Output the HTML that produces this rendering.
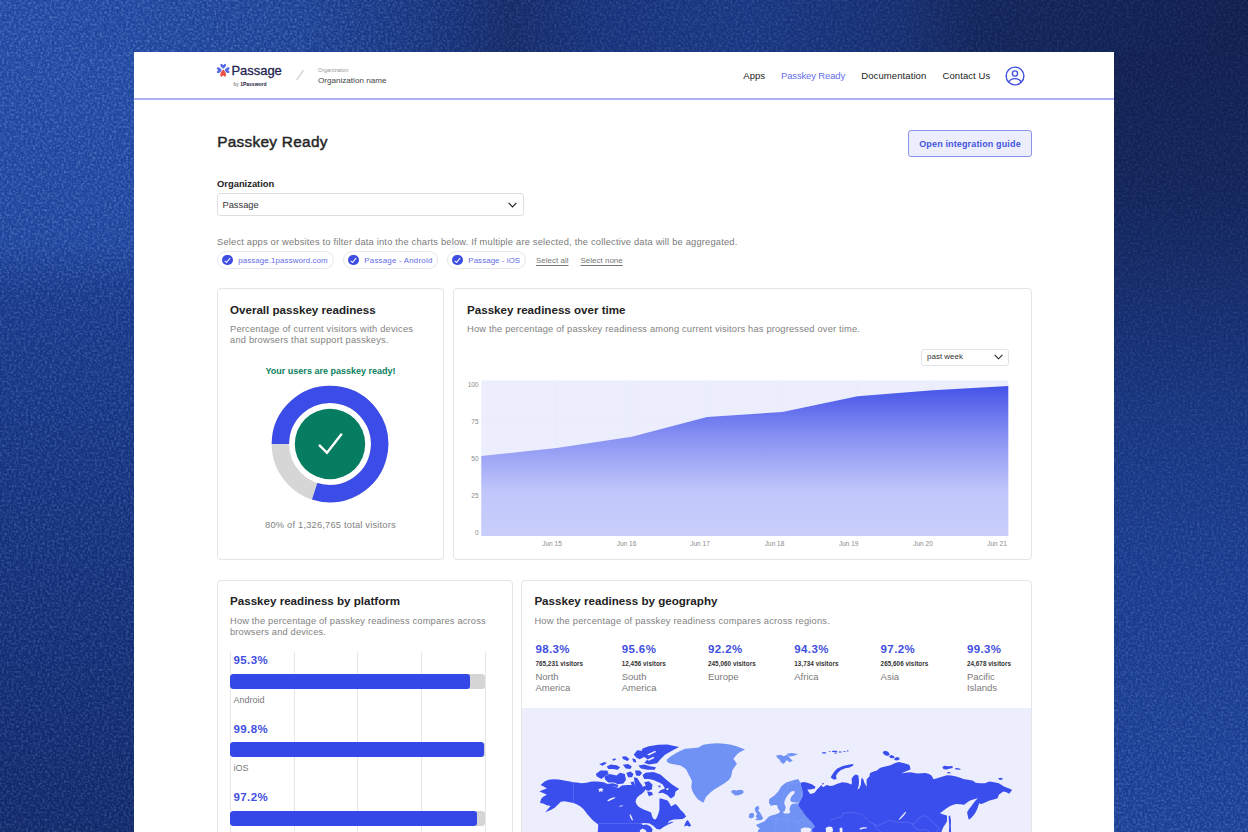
<!DOCTYPE html>
<html lang="en">
<head>
<meta charset="utf-8">
<title>Passkey Ready</title>
<style>
*{box-sizing:border-box;margin:0;padding:0}
html,body{width:1248px;height:832px;overflow:hidden}
body{font-family:"Liberation Sans",sans-serif;color:#222;position:relative;background:#18357f}
#bgT{position:absolute;left:0;top:0;width:1248px;height:52px;background:linear-gradient(to right,#2048a2 0px,#1f469e 134px,#1c4094 300px,#17327a 440px,#152a68 510px,#17327a 600px,#183580 750px,#162e70 900px,#13245a 980px,#111f4e 1248px)}
#bgL{position:absolute;left:0;top:52px;width:134px;height:780px;background:linear-gradient(to bottom,#2048a2 0px,#1e449c 190px,#18388a 240px,#163482 364px,#112869 780px)}
#bgR{position:absolute;left:1114px;top:52px;width:134px;height:780px;background:linear-gradient(to bottom,#122050 0px,#13245a 148px,#152c6c 248px,#17347e 364px,#193a8c 500px,#1b3f96 780px)}
#noise{position:absolute;left:0;top:0;width:1248px;height:832px;pointer-events:none}
#panel{position:absolute;left:134px;top:52px;width:980px;height:780px;background:#fff;overflow:hidden}
header{position:absolute;left:0;top:0;width:980px;height:48px;border-bottom:2px solid #aeb2f5;background:#fff}
.abs{position:absolute;white-space:nowrap}
h1,h2{font-weight:bold}
.card{position:absolute;background:#fff;border:1px solid #e5e5e8;border-radius:4px;overflow:hidden}
.card h2{position:absolute;left:12px;top:12.5px;font-size:11.6px;line-height:16px;color:#222;white-space:nowrap}
.card .desc{position:absolute;left:12px;font-size:9.3px;line-height:11px;color:#828282;white-space:nowrap;letter-spacing:0.21px}

.chip{position:absolute;top:199px;height:18px;border:1px solid #e7e7ed;border-radius:9px;white-space:nowrap;font-size:7.9px;line-height:16px;color:#636ce8}
.chip i{position:absolute;left:4px;top:2.7px;width:10.5px;height:10.5px;border-radius:50%;background:#3d4de2}
.chip i:after{content:"";position:absolute;left:3.6px;top:2.2px;width:2.4px;height:4.6px;border:solid #fff;border-width:0 1.1px 1.1px 0;transform:rotate(40deg)}
.chip span{position:absolute;left:20.3px;top:0.5px;letter-spacing:0.1px}
.lnk{font-size:8px;line-height:11px;color:#777;text-decoration:underline;text-underline-offset:1.5px}
.grid{top:71px;width:1px;height:210px;background:#e6e6e6}
.pct{left:15.5px;font-size:11.5px;line-height:14px;font-weight:bold;color:#3f4fe0;letter-spacing:0.4px;margin-top:0.5px}
.bar{position:absolute;left:12.3px;width:255px;height:15px;border-radius:3px;background:#d5d5d5;overflow:hidden}
.bar b{display:block;height:15px;border-radius:3px;background:#3448e8}
.plat{left:15.5px;font-size:9px;line-height:12px;color:#7a7a7a}
.geo{position:absolute;top:61px;width:86px}
.geo b{display:block;font-size:11.5px;line-height:14px;color:#3f4fe0;letter-spacing:0.4px}
.geo i{display:block;font-style:normal;letter-spacing:0.05px;font-size:6.3px;line-height:8px;margin-top:4px;color:#333;font-weight:bold;white-space:nowrap}
.geo span{display:block;font-size:9.5px;line-height:11.4px;margin-top:3px;color:#7a7a7a}
</style>
</head>
<body>
<div id="bgT"></div><div id="bgL"></div><div id="bgR"></div>
<svg id="noise" width="1248" height="832">
 <defs>
 <filter id="nf" x="0" y="0" width="100%" height="100%" color-interpolation-filters="sRGB">
  <feTurbulence type="fractalNoise" baseFrequency="0.42" numOctaves="2" seed="3" result="t"/>
  <feColorMatrix type="matrix" values="0 0 0 0 0.48  0 0 0 0 0.62  0 0 0 0 0.86  1.1 0 0 0 -0.44"/>
  <feGaussianBlur stdDeviation="0.6"/>
 </filter>
 <linearGradient id="gT" x1="0" y1="0" x2="1248" y2="0" gradientUnits="userSpaceOnUse">
  <stop offset="0" stop-color="#fff"/><stop offset="0.24" stop-color="#eee"/><stop offset="0.4" stop-color="#777"/><stop offset="0.6" stop-color="#888"/><stop offset="0.78" stop-color="#555"/><stop offset="1" stop-color="#444"/>
 </linearGradient>
 <linearGradient id="gL" x1="0" y1="52" x2="0" y2="832" gradientUnits="userSpaceOnUse">
  <stop offset="0" stop-color="#fff"/><stop offset="0.25" stop-color="#eee"/><stop offset="0.33" stop-color="#bbb"/><stop offset="1" stop-color="#999"/>
 </linearGradient>
 <linearGradient id="gR" x1="0" y1="52" x2="0" y2="832" gradientUnits="userSpaceOnUse">
  <stop offset="0" stop-color="#444"/><stop offset="0.3" stop-color="#555"/><stop offset="1" stop-color="#ccc"/>
 </linearGradient>
 <mask id="nm" maskUnits="userSpaceOnUse" x="0" y="0" width="1248" height="832">
  <rect x="0" y="0" width="1248" height="52" fill="url(#gT)"/>
  <rect x="0" y="52" width="134" height="780" fill="url(#gL)"/>
  <rect x="1114" y="52" width="134" height="780" fill="url(#gR)"/>
 </mask>
 </defs>
 <g mask="url(#nm)"><rect width="1248" height="832" filter="url(#nf)"/></g>
</svg>

<div id="panel">
 <header>
  <!-- logo -->
  <svg class="abs" style="left:82px;top:11px" width="15" height="15" viewBox="0 0 15 15">
   <g transform="translate(7.2,7.2)">
    <path d="M0,-1.5 C-3.7,-3.6 -3.3,-6.6 -1.5,-6.4 L0,-5 L1.5,-6.4 C3.3,-6.6 3.7,-3.6 0,-1.5Z" fill="#556ae4"/>
    <path d="M0,-1.5 C-3.7,-3.6 -3.3,-6.6 -1.5,-6.4 L0,-5 L1.5,-6.4 C3.3,-6.6 3.7,-3.6 0,-1.5Z" fill="#556ae4" transform="rotate(-90)"/>
    <path d="M0,-1.5 C-3.7,-3.6 -3.3,-6.6 -1.5,-6.4 L0,-5 L1.5,-6.4 C3.3,-6.6 3.7,-3.6 0,-1.5Z" fill="#556ae4" transform="rotate(90)"/>
    <path d="M0,0.6 C-3.8,-3 -3.3,-6.7 -1.5,-6.5 L0,-5 L1.5,-6.5 C3.3,-6.7 3.8,-3 0,0.6Z" fill="#ea4f49" transform="rotate(180)"/>
   </g>
  </svg>
  <div class="abs" id="brand" style="left:97.5px;top:10.5px;font-size:13px;line-height:16px;color:#1e2350;letter-spacing:-0.05px;-webkit-text-stroke:0.3px #1e2350">Passage</div>
  <div class="abs" id="by" style="left:99.5px;top:28.5px;font-size:5px;line-height:6px;color:#666">by <b style="color:#1a1a3a">1Password</b></div>
  <div class="abs" style="left:159.5px;top:22.7px;width:11.5px;height:1px;background:#c4c4c4;transform:rotate(-55deg);transform-origin:center"></div>
  <div class="abs" id="orglbl" style="left:184px;top:15.3px;font-size:5.4px;line-height:6px;color:#999">Organization</div>
  <div class="abs" id="orgname" style="left:184px;top:22.6px;font-size:8.1px;line-height:11px;color:#444">Organization name</div>
  <nav>
   <div class="abs" id="n1" style="left:609.3px;top:18px;font-size:9.5px;line-height:12px;color:#222">Apps</div>
   <div class="abs" id="n2" style="left:647px;top:18px;font-size:9.5px;letter-spacing:-0.15px;line-height:12px;color:#656eea">Passkey Ready</div>
   <div class="abs" id="n3" style="left:727.3px;top:18px;font-size:9.5px;letter-spacing:0.09px;line-height:12px;color:#222">Documentation</div>
   <div class="abs" id="n4" style="left:808.5px;top:18px;font-size:9.5px;letter-spacing:0.08px;line-height:12px;color:#222">Contact Us</div>
   <svg class="abs" style="left:869.9px;top:12.5px" width="22" height="22" viewBox="0 0 22 22" fill="none" stroke="#4252e0" stroke-width="1.4">
    <circle cx="11" cy="11" r="8.9"/>
    <circle cx="11" cy="8.5" r="2.6"/>
    <path d="M4.6 17.1 C6 14.6 8.4 13.6 11 13.6 C13.6 13.6 16 14.6 17.4 17.1"/>
   </svg>
  </nav>
 </header>

 <main>
  <h1 class="abs" id="title" style="left:83.2px;top:79.1px;font-size:15.4px;line-height:22px;color:#252525;letter-spacing:0.28px;font-weight:normal;-webkit-text-stroke:0.45px #252525">Passkey Ready</h1>
  <div class="abs" id="btn" style="left:774px;top:78px;width:124px;height:27px;border:1px solid #8c93ec;border-radius:3px;background:#eceefd;color:#4555dc;font-weight:bold;font-size:9px;line-height:25px;padding-top:1.2px;letter-spacing:0.14px;text-align:center">Open integration guide</div>

  <div class="abs" id="orgl" style="left:83px;top:125.5px;font-size:9.4px;line-height:12px;font-weight:bold;color:#222">Organization</div>
  <div class="abs" id="sel" style="left:83px;top:141px;width:307px;height:23px;border:1px solid #dedee0;border-radius:3px;font-size:9.3px;line-height:22px;padding-left:4.5px;color:#333">Passage
   <svg class="abs" style="right:6px;top:7.5px" width="9" height="6" viewBox="0 0 9 6" fill="none" stroke="#222" stroke-width="1.2"><path d="M0.6 0.8 L4.5 4.8 L8.4 0.8"/></svg>
  </div>

  <div class="abs" id="hint" style="left:83px;top:185.3px;font-size:9.3px;line-height:11px;color:#7a7a7a;letter-spacing:0.2px">Select apps or websites to filter data into the charts below. If multiple are selected, the collective data will be aggregated.</div>

  <div class="chip" style="left:83px;width:117px"><i></i><span>passage.1password.com</span></div>
  <div class="chip" style="left:209px;width:95px"><i></i><span style="letter-spacing:0.22px">Passage - Android</span></div>
  <div class="chip" style="left:313px;width:79px"><i></i><span style="letter-spacing:0.08px">Passage - iOS</span></div>
  <div class="abs lnk" id="sa" style="left:402px;top:203px">Select all</div>
  <div class="abs lnk" id="sn" style="left:446.5px;top:203px">Select none</div>

  <!-- Card 1 -->
  <section class="card" id="c1" style="left:83px;top:236px;width:227px;height:272px">
   <h2>Overall passkey readiness</h2>
   <div class="desc" style="top:35px">Percentage of current visitors with devices<br>and browsers that support passkeys.</div>
   <div class="abs" id="ready" style="left:0;width:225px;text-align:center;top:76px;font-size:9px;line-height:12px;font-weight:bold;color:#0a7f60">Your users are passkey ready!</div>
   <svg class="abs" style="left:52.3px;top:95.1px" width="120" height="120" viewBox="-60 -60 120 120">
    <circle r="49.6" fill="none" stroke="#d6d6d6" stroke-width="17.4"/>
    <path d="M-49.6 0 A49.6 49.6 0 1 1 -15.33 47.17" fill="none" stroke="#3b4ce8" stroke-width="17.4"/>
    <circle r="35.2" fill="#067c61"/>
    <path d="M-11 0.8 L-3 8.8 L11.8 -10.3" fill="none" stroke="#fff" stroke-width="2.4"/>
   </svg>
   <div class="abs" id="tot" style="left:0;width:225px;text-align:center;top:230px;font-size:9.3px;line-height:12px;color:#828282;letter-spacing:0.2px">80% of 1,326,765 total visitors</div>
  </section>

  <!-- Card 2 -->
  <section class="card" id="c2" style="left:319px;top:236px;width:579px;height:272px">
   <h2 style="left:13px">Passkey readiness over time</h2>
   <div class="desc" style="top:35px;left:13px;letter-spacing:0.18px">How the percentage of passkey readiness among current visitors has progressed over time.</div>
   <div class="abs" id="pw" style="left:467px;top:60px;width:88px;height:17px;border:1px solid #e2e2e6;border-radius:3px;font-size:8px;line-height:14.2px;padding-left:5px;color:#333">past week
    <svg class="abs" style="right:5.5px;top:4px" width="9" height="6" viewBox="0 0 9 6" fill="none" stroke="#222" stroke-width="1.1"><path d="M0.6 0.8 L4.5 4.8 L8.4 0.8"/></svg>
   </div>
   <svg class="abs" style="left:0;top:79.3px" width="577" height="190" viewBox="454 368 577 190" font-family="Liberation Sans, sans-serif">
    <defs><linearGradient id="ag" x1="0" y1="386" x2="0" y2="536" gradientUnits="userSpaceOnUse">
     <stop offset="0" stop-color="#4453e8"/><stop offset="0.35" stop-color="#8a93f3"/><stop offset="0.7" stop-color="#c0c6fa"/><stop offset="1" stop-color="#c9cefb"/></linearGradient></defs>
    <rect x="481.3" y="380.4" width="527" height="155.6" fill="#eceefd"/>
    <g stroke="#e6e8fc" stroke-width="0.5">
     <path d="M481 419.3H1008M481 458.2H1008M481 497.1H1008"/>
     <path d="M556.5 380V536M631.8 380V536M707 380V536M782.3 380V536M857.5 380V536M932.8 380V536"/>
    </g>
    <path d="M481.3 536 L481.3 456 L556.5 448 L631.8 436.8 L707 417 L782.3 412 L857.5 396.2 L932.8 390.3 L1008.3 386 L1008.3 536 Z" fill="url(#ag)"/>
    <g font-size="6.5" fill="#8a8a8a" text-anchor="end">
     <text x="478.5" y="386.8">100</text><text x="478.5" y="423.5">75</text><text x="478.5" y="461">50</text><text x="478.5" y="497.6">25</text><text x="478.5" y="534.8">0</text>
    </g>
    <g font-size="6.5" fill="#8a8a8a" text-anchor="middle">
     <text x="552" y="545.6">Jun 15</text><text x="626.5" y="545.6">Jun 16</text><text x="700" y="545.6">Jun 17</text><text x="774.6" y="545.6">Jun 18</text><text x="848.7" y="545.6">Jun 19</text><text x="923" y="545.6">Jun 20</text><text x="997" y="545.6">Jun 21</text>
    </g>
   </svg>
  </section>

  <!-- Card 3 -->
  <section class="card" id="c3" style="left:83px;top:527.6px;width:296px;height:272px">
   <h2>Passkey readiness by platform</h2>
   <div class="desc" style="top:35px;letter-spacing:0.17px">How the percentage of passkey readiness compares across<br>browsers and devices.</div>
   <div class="abs grid" style="left:12.2px"></div><div class="abs grid" style="left:75.7px"></div><div class="abs grid" style="left:139.3px"></div><div class="abs grid" style="left:203px"></div><div class="abs grid" style="left:266.7px"></div>
   <div class="abs pct" style="top:72px">95.3%</div>
   <div class="bar" style="top:93px"><b style="width:240px"></b></div>
   <div class="abs plat" style="top:113px">Android</div>
   <div class="abs pct" style="top:140.7px">99.8%</div>
   <div class="bar" style="top:161.7px"><b style="width:253.5px"></b></div>
   <div class="abs plat" style="top:181.7px">iOS</div>
   <div class="abs pct" style="top:209.4px">97.2%</div>
   <div class="bar" style="top:230.4px"><b style="width:247px"></b></div>
   <div class="abs plat" style="top:250.4px">Windows</div>
  </section>

  <!-- Card 4 -->
  <section class="card" id="c4" style="left:387.4px;top:527.6px;width:510.6px;height:272px">
   <h2>Passkey readiness by geography</h2>
   <div class="desc" style="top:35px">How the percentage of passkey readiness compares across regions.</div>
   <div class="geo" style="left:13px"><b>98.3%</b><i>765,231 visitors</i><span>North<br>America</span></div>
   <div class="geo" style="left:99.3px"><b>95.6%</b><i>12,456 visitors</i><span>South<br>America</span></div>
   <div class="geo" style="left:185.6px"><b>92.2%</b><i>245,060 visitors</i><span>Europe</span></div>
   <div class="geo" style="left:271.9px"><b>94.3%</b><i>13,734 visitors</i><span>Africa</span></div>
   <div class="geo" style="left:358.2px"><b>97.2%</b><i>265,606 visitors</i><span>Asia</span></div>
   <div class="geo" style="left:444.5px"><b>99.3%</b><i>24,678 visitors</i><span>Pacific<br>Islands</span></div>
   <svg class="abs" id="map" style="left:-1px;top:127.4px" width="511" height="145" viewBox="521.4 708 511 145">
    <rect x="521" y="708" width="512" height="145" fill="#eceefd"/>
<!--MAP-->
<path d="M553.7 779.3 L549.0 779.8 L545.0 781.6 L541.0 785.0 L544.0 786.5 L547.3 788.5 L543.0 790.0 L539.8 791.4 L543.5 793.0 L547.3 794.8 L543.5 796.8 L541.5 798.9 L540.4 803.0 L543.5 803.5 L547.3 805.2 L551.0 806.0 L548.0 809.5 L545.6 812.2 L550.5 810.3 L554.8 808.1 L558.5 804.5 L561.2 801.8 L564.6 801.2 L569.0 802.0 L573.8 802.9 L577.5 804.5 L580.8 806.4 L583.5 808.8 L585.4 811.0 L587.5 814.0 L590.0 816.8 L592.2 819.3 L594.6 821.4 L596.8 823.0 L598.7 824.8 L598.5 828.0 L598.0 833.0 L640.0 833.0 L640.5 830.0 L643.0 828.5 L646.0 830.0 L647.5 833.0 L652.0 833.0 L653.0 829.5 L651.0 826.5 L647.0 824.5 L643.5 825.0 L641.0 823.6 L645.0 823.0 L650.0 823.5 L654.0 826.0 L657.0 829.0 L660.5 829.5 L664.0 827.0 L668.0 824.8 L671.5 823.3 L674.5 821.8 L671.0 822.0 L668.0 823.5 L669.5 821.0 L673.8 819.5 L678.5 819.3 L683.0 819.0 L686.5 816.8 L685.0 814.0 L683.0 811.8 L680.8 809.8 L678.5 806.5 L676.0 804.0 L673.8 805.0 L671.5 806.4 L670.0 803.5 L668.0 800.6 L664.0 799.3 L660.0 798.3 L659.8 802.0 L659.8 805.2 L659.8 809.8 L658.8 813.5 L657.5 817.0 L656.0 819.5 L654.0 819.0 L652.5 816.5 L651.5 812.5 L648.0 811.0 L644.6 809.8 L641.5 808.3 L638.8 806.4 L636.8 804.0 L636.0 801.8 L636.5 799.3 L637.7 797.2 L640.0 795.3 L642.3 793.7 L644.6 791.5 L646.0 789.5 L649.0 787.5 L652.0 786.5 L651.0 784.5 L648.0 783.5 L646.5 785.5 L643.5 786.8 L640.8 786.8 L637.0 785.5 L633.8 785.0 L628.0 785.0 L622.3 785.6 L618.8 787.9 L614.5 786.5 L610.8 785.6 L607.0 783.6 L603.8 782.2 L598.0 781.6 L592.3 781.6 L587.0 782.8 L581.9 783.3 L577.5 782.5 L573.8 782.2 L569.0 781.2 L564.6 780.4 L559.0 779.5Z" fill="#3a4eee"/>
<path d="M598.5 789.5 L601.0 788.3 L604.0 789.0 L602.5 790.5 L603.5 791.8 L600.8 791.3 L599.5 792.3 L599.6 790.6Z" fill="#eceefd"/>
<path d="M607.5 800.8 L610.0 798.8 L613.5 797.6 L616.0 797.2 L614.5 798.8 L611.5 800.0 L609.0 801.2Z" fill="#eceefd"/>
<path d="M629.8 814.7 L631.0 814.5 L632.5 817.5 L633.5 820.5 L632.3 820.3 L630.8 817.5Z" fill="#eceefd"/>
<path d="M619.5 806.0 L623.0 805.2 L623.5 806.0 L620.0 806.8Z" fill="#eceefd"/>
<path d="M688.0 820.0 L689.5 822.0 L691.5 825.5 L690.0 826.8 L687.5 825.6 L684.5 826.4 L685.5 823.5 L686.5 821.5Z" fill="#3a4eee"/>
<path d="M596.2 774.1 L600.8 770.4 L607.7 770.4 L609.1 774.1 L604.8 776.4 L601.9 778.9 L597.3 776.6Z" fill="#3a4eee"/>
<path d="M604.8 776.6 L610.0 774.1 L616.9 775.5 L620.4 772.7 L625.2 774.1 L626.4 779.8 L623.8 783.5 L618.1 784.2 L614.6 782.4 L608.8 782.4 L605.4 779.5Z" fill="#3a4eee"/>
<path d="M607.7 783.9 L613.5 783.3 L618.7 785.0 L618.1 787.3 L613.5 786.2 L608.8 785.8Z" fill="#3a4eee"/>
<path d="M599.6 764.3 L604.8 762.1 L607.3 763.1 L603.1 765.7Z" fill="#3a4eee"/>
<path d="M607.1 766.6 L611.2 764.6 L616.9 765.3 L620.6 767.2 L618.1 769.7 L613.5 769.0 L608.8 769.1Z" fill="#3a4eee"/>
<path d="M612.3 759.7 L615.2 758.2 L616.7 759.3 L614.0 760.8Z" fill="#3a4eee"/>
<path d="M622.1 756.8 L626.2 756.3 L629.8 759.1 L627.9 761.0 L623.8 759.3Z" fill="#3a4eee"/>
<path d="M623.3 764.8 L628.5 764.0 L632.2 766.6 L630.8 769.1 L626.2 768.5Z" fill="#3a4eee"/>
<path d="M632.5 758.5 L635.6 759.1 L636.8 762.2 L634.0 762.2Z" fill="#3a4eee"/>
<path d="M626.7 772.9 L630.8 771.5 L633.9 774.1 L632.5 777.2 L628.5 777.2Z" fill="#3a4eee"/>
<path d="M635.4 770.6 L640.0 770.4 L642.5 772.9 L640.0 776.0 L636.5 775.5Z" fill="#3a4eee"/>
<path d="M634.2 777.3 L637.7 777.9 L640.2 782.2 L642.9 785.8 L642.3 790.2 L637.7 790.2 L635.4 784.7Z" fill="#3a4eee"/>
<path d="M630.8 782.2 L634.2 781.6 L635.4 785.0 L632.5 785.6Z" fill="#3a4eee"/>
<path d="M634.2 754.5 L637.7 750.2 L642.3 750.8 L642.9 748.5 L649.2 746.2 L658.5 744.8 L667.7 744.4 L679.5 747.0 L672.3 750.7 L665.4 754.7 L660.8 759.3 L657.5 763.3 L649.2 764.5 L644.6 762.8 L648.1 759.3 L644.6 757.0 L640.0 759.3 L636.5 757.6Z" fill="#3a4eee"/>
<path d="M638.8 765.4 L644.6 764.6 L650.4 766.3 L656.4 767.2 L655.0 769.7 L648.1 769.7 L641.2 768.5Z" fill="#3a4eee"/>
<path d="M642.9 775.2 L645.8 772.7 L653.8 772.1 L660.8 774.4 L665.6 778.7 L672.5 784.5 L679.5 789.1 L676.0 791.6 L674.8 796.2 L671.2 798.5 L667.7 795.1 L663.1 792.8 L658.5 793.3 L660.8 790.2 L665.4 788.5 L663.1 784.5 L659.6 782.4 L653.8 780.1 L649.2 778.9 L644.6 778.9Z" fill="#3a4eee"/>
<path d="M644.6 782.2 L649.2 781.3 L652.9 784.5 L652.3 789.3 L649.2 790.8 L646.3 790.2 L646.7 786.8Z" fill="#3a4eee"/>
<path d="M647.5 791.6 L652.1 792.0 L653.5 794.8 L649.2 796.2Z" fill="#3a4eee"/>
<path d="M658.8 785.4 L660.8 785.4 L661.0 787.3 L659.0 787.3Z" fill="#3a4eee"/>
<path d="M647.5 754.5 L655.6 750.8 L656.4 751.9 L649.2 755.4Z" fill="#eceefd"/>
<path d="M647.5 759.7 L653.8 756.8 L654.8 757.9 L649.2 760.8Z" fill="#eceefd"/>
<path d="M666.8 788.2 L668.8 788.2 L668.8 790.0 L666.8 790.0Z" fill="#eceefd"/>
<path d="M666.9 759.7 L671.0 756.5 L676.2 753.3 L680.5 751.0 L685.4 748.7 L692.0 748.2 L699.2 747.5 L701.5 745.8 L703.8 744.7 L710.0 743.7 L717.7 743.2 L725.0 743.8 L731.5 744.7 L736.0 746.0 L741.0 747.8 L745.4 749.6 L742.0 751.2 L738.5 753.3 L736.0 756.0 L733.8 759.1 L735.8 761.5 L737.3 763.7 L735.0 767.0 L732.7 770.6 L732.2 773.5 L731.5 776.4 L730.0 779.0 L728.0 781.0 L724.5 783.5 L721.2 785.6 L718.0 787.5 L715.4 789.1 L713.0 790.8 L710.8 792.5 L708.5 794.8 L706.2 797.2 L705.0 800.0 L703.8 802.7 L700.8 801.0 L698.0 798.9 L695.5 795.8 L693.5 792.5 L692.3 789.5 L691.7 786.8 L692.0 784.0 L692.3 781.0 L691.0 778.0 L689.4 775.2 L688.0 772.3 L686.5 769.5 L683.8 767.2 L680.8 765.4 L677.0 764.8 L673.8 764.3 L670.5 763.5 L668.0 762.5Z" fill="#7092f4"/>
<path d="M731.5 791.0 L734.0 789.9 L737.0 790.6 L740.0 789.7 L743.0 790.2 L744.3 792.0 L742.5 794.0 L739.0 795.2 L735.5 795.5 L733.5 793.8 L732.0 792.8Z" fill="#7092f4"/>
<path d="M776.7 755.6 L780.8 754.8 L784.2 756.2 L787.7 754.5 L790.2 757.9 L793.1 760.8 L790.0 762.2 L787.3 759.9 L785.6 762.2 L783.7 763.9 L781.3 762.2 L779.6 759.3 L777.3 757.6Z" fill="#7092f4"/>
<path d="M787.1 753.7 L792.3 753.1 L798.3 754.1 L794.6 755.8 L790.0 756.4Z" fill="#7092f4"/>
<path d="M798.8 779.0 L792.8 780.4 L786.1 782.7 L781.6 786.4 L778.6 791.6 L774.9 795.4 L769.7 799.1 L769.3 802.8 L771.2 805.8 L774.9 805.0 L777.2 805.0 L778.3 807.8 L779.4 810.3 L782.0 811.3 L784.6 811.8 L785.6 809.5 L786.1 807.3 L785.2 805.0 L784.6 802.8 L785.2 800.5 L786.1 798.3 L787.5 796.0 L789.1 793.9 L790.5 792.5 L792.1 791.3 L795.0 790.9 L795.0 793.1 L793.5 794.7 L792.1 796.1 L791.2 798.0 L790.6 799.8 L791.2 801.2 L792.1 802.1 L795.5 802.5 L799.5 802.8 L803.3 796.1 L802.5 789.4 L800.6 782.7Z" fill="#7092f4"/>
<path d="M756.5 824.8 L760.0 823.5 L764.6 821.4 L767.0 819.0 L769.2 816.8 L772.5 815.3 L776.0 814.5 L778.5 813.5 L780.3 812.0 L780.3 809.5 L782.0 809.0 L783.0 811.0 L784.2 813.3 L786.1 813.6 L789.0 813.4 L790.6 812.5 L789.8 808.8 L791.3 805.0 L793.0 803.8 L796.0 803.5 L799.5 803.3 L798.8 805.8 L801.8 810.3 L806.2 816.2 L812.2 822.2 L815.2 826.7 L812.2 829.7 L813.5 833.0 L758.0 833.0 L758.5 830.0 L760.5 828.3 L758.0 827.0Z" fill="#7092f4"/>
<path d="M756.5 806.4 L759.0 806.0 L759.8 808.5 L758.5 810.5 L760.5 812.5 L762.0 815.5 L763.5 818.0 L762.5 819.8 L759.0 820.2 L755.5 820.0 L757.5 818.0 L756.0 816.5 L757.5 814.0 L756.0 812.0 L755.0 809.0Z" fill="#7092f4"/>
<path d="M750.0 813.5 L753.0 812.7 L754.8 814.5 L754.0 817.5 L751.0 818.5 L749.0 817.0Z" fill="#7092f4"/>
<path d="M800.6 782.7 L804.7 781.9 L808.5 783.0 L812.2 784.2 L815.9 786.8 L815.2 788.6 L810.7 789.4 L807.7 789.4 L809.0 791.8 L810.7 793.9 L813.0 793.4 L815.2 792.4 L817.4 789.4 L819.7 787.2 L821.9 784.9 L823.4 787.2 L827.1 784.9 L830.5 786.0 L833.8 785.6 L837.0 783.9 L842.7 782.2 L847.3 782.7 L852.0 784.5 L852.3 781.5 L852.0 778.7 L853.5 776.5 L855.4 774.7 L857.5 774.8 L858.8 775.8 L859.2 779.0 L859.4 782.2 L859.0 786.0 L857.7 789.7 L860.0 788.0 L861.3 784.5 L861.5 780.5 L862.3 777.5 L863.8 779.5 L864.6 782.2 L866.0 785.0 L867.2 786.8 L867.0 783.0 L867.0 779.5 L868.5 777.8 L869.8 776.4 L870.4 772.9 L874.0 771.6 L877.3 770.6 L879.0 769.0 L880.8 767.7 L885.5 766.5 L890.0 765.4 L893.0 764.2 L895.8 763.1 L899.2 762.0 L904.5 763.2 L909.6 764.8 L910.5 767.0 L910.8 769.5 L906.0 771.6 L901.5 773.5 L906.0 772.8 L910.8 772.3 L917.7 773.5 L925.8 772.9 L928.8 773.8 L931.5 775.2 L933.0 777.3 L933.8 779.3 L937.5 778.3 L941.5 777.0 L947.3 775.2 L952.0 775.6 L956.5 776.4 L960.5 777.8 L964.6 779.3 L968.5 779.8 L972.7 780.4 L974.5 781.6 L976.0 782.7 L980.5 783.2 L985.4 783.3 L987.8 782.3 L990.0 781.6 L994.5 782.3 L999.2 783.3 L1002.0 785.0 L1005.0 786.8 L1008.8 788.2 L1012.5 789.7 L1011.2 791.8 L1009.6 793.7 L1006.8 792.3 L1003.8 791.4 L1001.5 793.0 L999.2 794.8 L998.6 796.5 L998.0 798.3 L994.0 799.5 L990.0 800.6 L986.0 802.3 L982.0 804.0 L980.3 803.8 L979.6 803.0 L978.5 806.5 L977.3 809.8 L975.8 812.8 L973.8 815.6 L971.5 818.0 L969.2 819.7 L968.2 816.0 L967.5 812.2 L969.3 809.3 L971.5 806.4 L973.8 803.3 L976.0 800.6 L977.3 799.3 L978.5 798.3 L974.5 799.3 L970.4 800.6 L967.5 802.6 L964.6 804.7 L960.5 804.2 L956.5 804.0 L953.0 805.0 L949.6 806.4 L945.0 809.8 L940.4 813.3 L943.8 814.6 L947.3 815.6 L947.5 818.5 L947.3 821.4 L945.7 824.3 L943.8 827.0 L942.5 830.0 L941.5 833.0 L813.5 833.0 L812.2 829.7 L815.2 826.7 L812.2 822.2 L806.2 816.2 L801.8 810.3 L798.8 805.8 L799.5 802.8 L803.3 796.1 L802.5 789.4Z" fill="#3a4eee"/>
<path d="M899.2 819.2 L901.5 816.5 L904.0 813.8 L906.0 811.4 L906.5 812.5 L904.5 815.2 L902.0 818.0 L900.0 819.8Z" fill="#eceefd"/>
<path d="M826.0 828.0 L829.0 826.5 L832.5 827.0 L833.5 830.0 L832.5 833.0 L826.5 833.0Z" fill="#eceefd"/>
<path d="M840.0 828.0 L842.5 827.5 L843.0 830.5 L842.5 833.0 L840.2 833.0Z" fill="#eceefd"/>
<path d="M860.0 828.3 L863.5 827.3 L867.0 827.2 L867.2 828.3 L863.5 828.8 L860.5 829.8Z" fill="#eceefd"/>
<path d="M801.0 829.0 L804.5 827.4 L809.0 827.8 L812.0 829.0 L811.0 831.5 L808.0 833.0 L801.5 833.0Z" fill="#eceefd"/>
<path d="M949.0 816.0 L950.5 815.6 L951.3 820.0 L951.2 826.0 L951.5 833.0 L949.3 833.0 L949.6 826.0 L949.2 820.0Z" fill="#3a4eee"/>
<path d="M853.5 764.0 L850.0 764.6 L843.1 766.0 L837.3 768.7 L834.4 772.1 L832.1 775.6 L831.1 777.5 L834.4 779.8 L837.0 778.9 L836.4 775.8 L838.1 772.9 L841.0 770.3 L845.6 768.3 L850.0 767.4 L853.7 765.5Z" fill="#3a4eee"/>
<path d="M822.5 783.3 L824.0 783.0 L824.3 784.2 L822.8 784.4Z" fill="#3a4eee"/>
<rect x="822.5" y="752.3" width="4" height="1.1" rx="0.5" fill="#3a4eee"/>
<rect x="829" y="751.2" width="2" height="0.9" rx="0.5" fill="#3a4eee"/>
<rect x="832.5" y="750.8" width="5" height="1.3" rx="0.5" fill="#3a4eee"/>
<rect x="834.5" y="752.6" width="3" height="0.9" rx="0.5" fill="#3a4eee"/>
<rect x="839" y="751.5" width="3" height="1" rx="0.5" fill="#3a4eee"/>
<rect x="843.5" y="751.2" width="2.5" height="0.9" rx="0.5" fill="#3a4eee"/>
<rect x="847" y="750.6" width="2" height="0.8" rx="0.5" fill="#3a4eee"/>
<path d="M883.0 752.0 L885.5 750.8 L888.5 751.8 L890.2 754.3 L888.5 756.0 L885.5 755.2 L883.8 753.8Z" fill="#3a4eee"/>
<path d="M889.5 756.0 L892.0 755.0 L894.5 756.3 L894.8 758.0 L892.0 758.3 L890.0 757.5Z" fill="#3a4eee"/>
<path d="M894.5 758.8 L897.0 757.0 L899.8 757.8 L900.0 759.5 L897.0 760.5 L895.0 760.0Z" fill="#3a4eee"/>
<path d="M942.7 767.0 L945.0 765.8 L948.5 766.3 L953.0 766.0 L953.0 768.0 L949.5 768.8 L947.0 769.6 L944.0 769.2Z" fill="#3a4eee"/>
<path d="M955.4 768.2 L958.0 768.0 L961.0 769.0 L960.8 769.8 L957.5 769.5 L955.5 769.2Z" fill="#3a4eee"/>
<path d="M947.5 772.2 L950.5 772.0 L951.0 773.3 L948.0 773.5Z" fill="#3a4eee"/>
<path d="M998.7 778.3 L1001.0 777.8 L1003.3 778.5 L1002.5 779.8 L999.5 779.8Z" fill="#3a4eee"/>
<g fill="none" stroke="#7d8bf6" stroke-width="0.5" opacity="0.8"><path d="M573.8 782.3 L573.8 802.8"/><path d="M598.8 823.4 L636 823.4 L641 823.6"/><path d="M830 821 L836 818 L842.5 817 L843 813.5 L848 812.5 L856 812.8 L862 814.5 L866 818 L869 821.5 L874 824 L878 826 L884 823 L890 820.5 L896 822 L902 822.5 L908 822 L913 824 L917 822 L919.5 817.5 L924 815.5 L929 818 L933 822 L937 825.5 L939.5 829 L936 832"/><path d="M874 824 L877 828 L881 832"/><path d="M913 824 L915 828 L921 830.5 L926 829 L930 832"/></g>
<g fill="none" stroke="#8aa6f7" stroke-width="0.4" opacity="0.9"><path d="M790 793.5 L787.5 788 L789 784.5 L792 782.5 L796 783.5 L799.5 781.5"/><path d="M782 809 L781.5 803 L783 797 L785.5 791 L787.5 788"/><path d="M799.5 781.5 L801 785 L800 790 L802 795 L800 800 L797 802.5"/><path d="M769 817 L775 820 L780 818.5 L786 821 L792 819.5 L798 822 L804 820 L809 822.5 L812 826"/><path d="M776 814.5 L777 820 L775 826 L778 832"/><path d="M786 813.5 L787 820 L790 826 L788 832"/><path d="M795 809.5 L799 812 L804 811"/><path d="M798 822 L799 828 L797 832"/></g>
<!--/MAP-->
   </svg>
  </section>
 </main>
</div>
</body>
</html>
